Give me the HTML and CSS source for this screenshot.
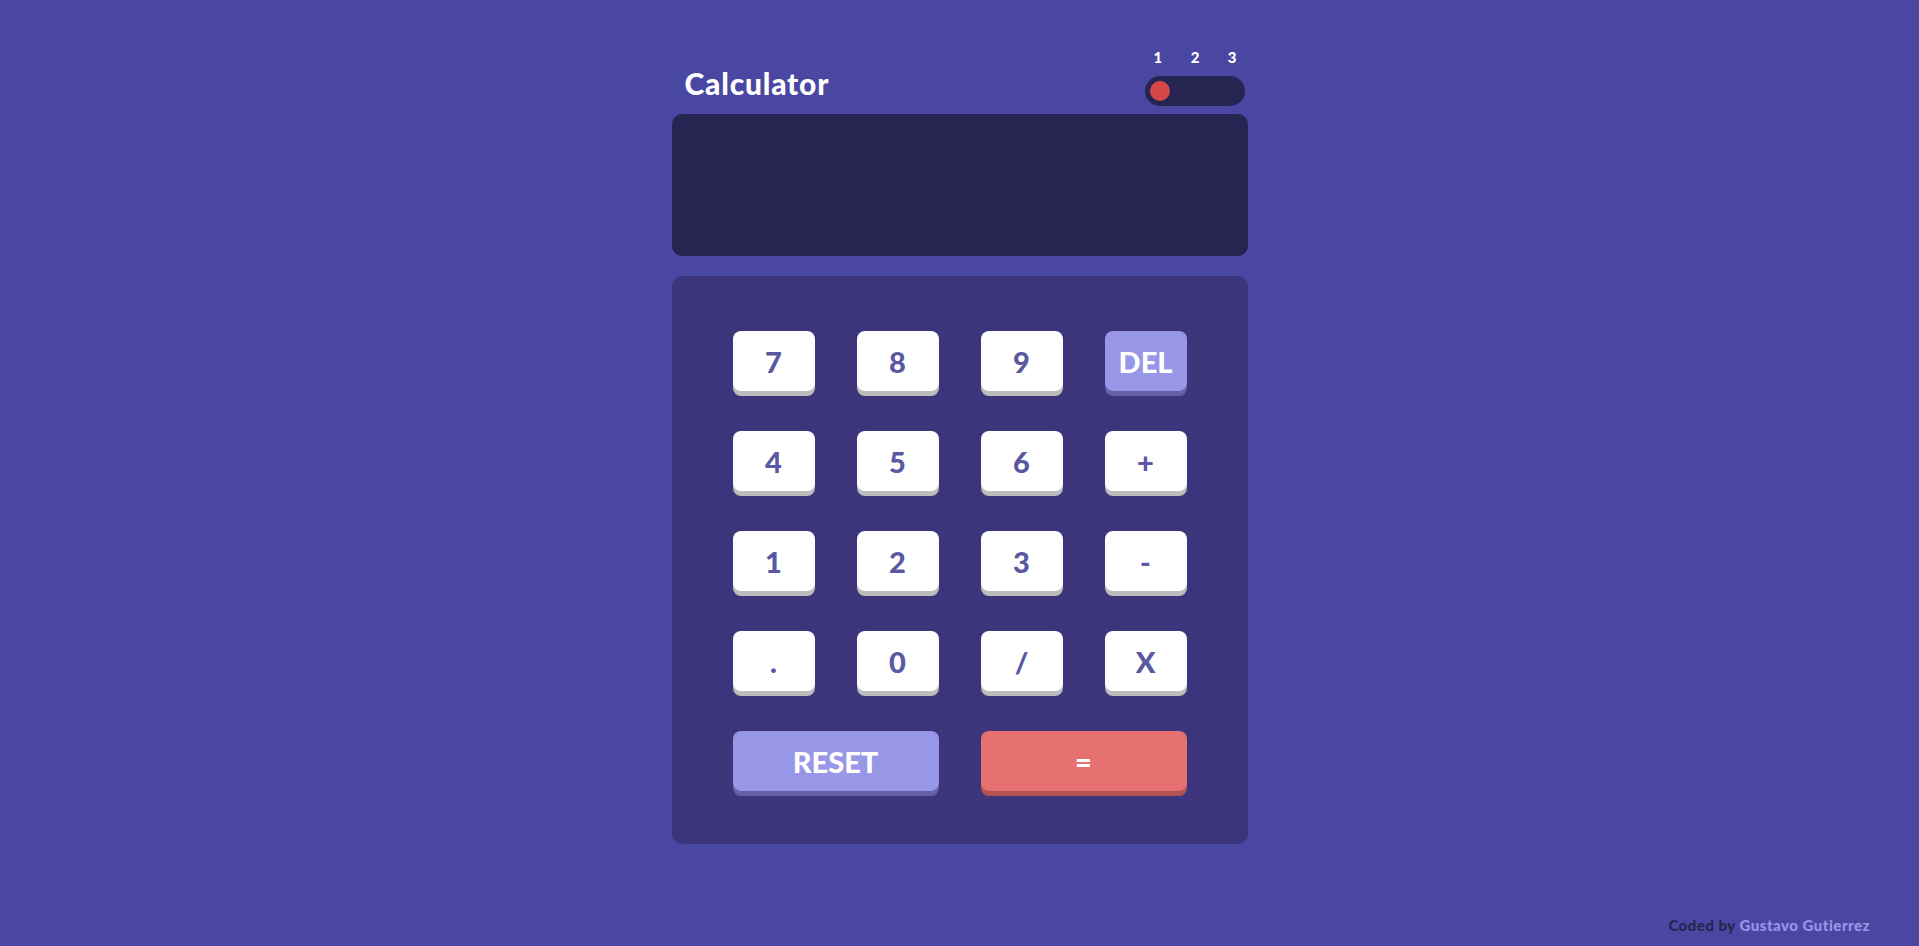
FILE: index.html
```html
<!DOCTYPE html>
<html lang="en">
<head>
<meta charset="utf-8">
<title>Calculator</title>
<link rel="stylesheet" href="styles.css">
</head>
<body>
<main class="calc">
  <header class="calc-header">
    <h1 class="calc-title">Calculator</h1>
    <div class="theme">
      <div class="theme-nums"><span>1</span><span>2</span><span>3</span></div>
      <div class="theme-track"><span class="theme-knob"></span></div>
    </div>
  </header>
  <section class="screen"></section>
  <section class="keypad">
    <button class="key">7</button>
    <button class="key">8</button>
    <button class="key">9</button>
    <button class="key key-alt">DEL</button>
    <button class="key">4</button>
    <button class="key">5</button>
    <button class="key">6</button>
    <button class="key">+</button>
    <button class="key">1</button>
    <button class="key">2</button>
    <button class="key">3</button>
    <button class="key">-</button>
    <button class="key">.</button>
    <button class="key">0</button>
    <button class="key">/</button>
    <button class="key">X</button>
    <button class="key key-alt key-wide">RESET</button>
    <button class="key key-eq key-wide">=</button>
  </section>
</main>
<footer class="credit">Coded by <span class="credit-name">Gustavo Gutierrez</span></footer>
</body>
</html>
```
FILE: styles.css
```css
* { box-sizing: border-box; }
html, body { height: 100%; }
body {
  margin: 0;
  background: #4a47a3;
  font-family: "Lato", "Liberation Sans", sans-serif;
  display: flex;
  flex-direction: column;
  min-height: 100vh;
}
.calc {
  width: 576px;
  margin: 0 auto;
  padding-top: 47px;
}
.calc-header {
  display: flex;
  justify-content: space-between;
  align-items: flex-end;
  margin-bottom: 8px;
}
.calc-title {
  margin: 0 0 8px 0;
  padding-left: 13px;
  font-size: 30px;
  line-height: 1;
  font-weight: 900;
  color: #ffffff;
  letter-spacing: 0.8px;
}
.theme {
  margin-right: 3px;
  width: 100px;
  display: flex;
  flex-direction: column;
}
.theme-nums {
  display: flex;
  justify-content: space-between;
  padding: 0 8px 0 9px;
  font-size: 15px;
  line-height: 20px;
  font-weight: 900;
  color: #ffffff;
  margin-bottom: 9px;
}
.theme-track {
  height: 30px;
  border-radius: 15px;
  background: #262450;
  display: flex;
  align-items: center;
  padding-left: 5px;
}
.theme-knob {
  width: 20px;
  height: 20px;
  border-radius: 50%;
  background: #d64848;
}
.screen {
  height: 142px;
  border-radius: 10px;
  background: #262450;
  margin-bottom: 20px;
}
.keypad {
  background: #3d357b;
  border-radius: 10px;
  padding: 55px 61px 53px;
  display: grid;
  grid-template-columns: repeat(4, 82px);
  grid-auto-rows: 60px;
  column-gap: 42px;
  row-gap: 40px;
}
.key {
  border: 0;
  margin: 0;
  padding: 0;
  border-radius: 8px;
  background: #ffffff;
  box-shadow: 0 5px 0 #bdbdbd;
  color: #5a58a0;
  font-family: "Lato", "Liberation Sans", sans-serif;
  font-weight: 900;
  font-size: 29px;
  line-height: 1;
  cursor: pointer;
}
.key-alt {
  background: #9896e6;
  box-shadow: 0 5px 0 #6461a5;
  color: #ffffff;
}
.key-eq {
  background: #e77070;
  box-shadow: 0 5px 0 #b25252;
  color: #ffffff;
}
.key-wide { grid-column: span 2; }
.credit {
  margin-top: auto;
  text-align: right;
  padding: 0 49px 12px 0;
  font-size: 15px;
  line-height: 18px;
  font-weight: 900;
  letter-spacing: 0.5px;
  color: #262450;
}
.credit-name { color: #9896e6; }
```
